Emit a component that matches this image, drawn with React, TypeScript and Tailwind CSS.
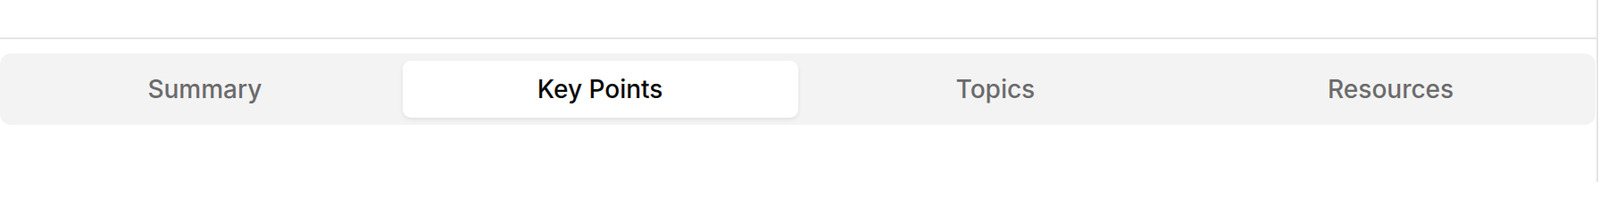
import { useState } from 'react';

const tabs = ['Summary', 'Key Points', 'Topics', 'Resources'];

export default function App() {
  const [active, setActive] = useState('Key Points');

  return (
    <div className="h-[204px] w-[1792px] bg-white font-['Inter',sans-serif]">
      <div className="flex h-full w-[1790px] flex-col border-r-2 border-[#e5e5e5]">
        {/* header strip */}
        <div className="h-[44px] shrink-0 border-b-2 border-[#e5e5e5]" />

        <div className="pt-4">
          <div className="grid h-[80px] w-[1787px] grid-cols-4 rounded-[12px] bg-[#f3f3f3] p-2">
            {tabs.map((tab) => (
              <button
                key={tab}
                onClick={() => setActive(tab)}
                className={
                  active === tab
                    ? 'flex items-center justify-center rounded-[9px] bg-white text-[28px] font-medium text-[#0a0a0a] shadow-[0_2px_4px_rgba(0,0,0,0.08)]'
                    : 'flex items-center justify-center rounded-[9px] text-[28px] font-medium text-[#6b6b6b]'
                }
              >
                {tab}
              </button>
            ))}
          </div>
        </div>
      </div>
    </div>
  );
}
